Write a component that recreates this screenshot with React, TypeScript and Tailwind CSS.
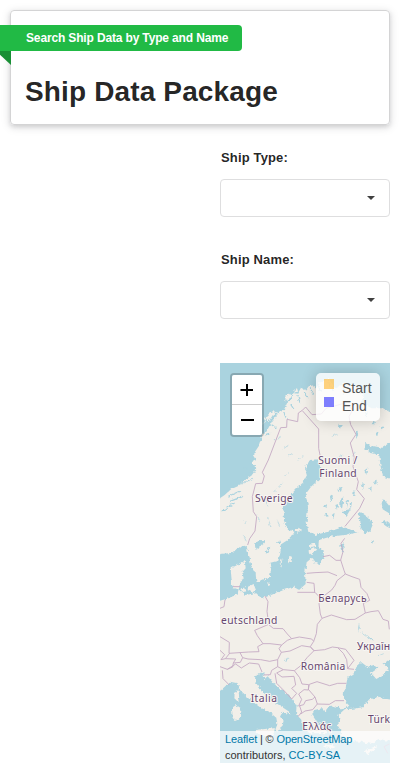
const placeLabels = "fill-[#66466f] stroke-[#f8f6f3] font-['Noto_Sans',sans-serif]";

const land = [
  // Scandinavia, Finland and the eastern mainland down to the Black Sea
  'M0 588 L15 582 L48 579 L70 565 L82 555 L95 560 L103 590 L108 615 L122 640 L124 665 L142 660 L164 650 L170 625 L166 608 L190 602 L197 575 L195 555 L226 535 L238 517 L218 508 L207 482 L205 440 L222 410 L245 385 L264 368 L276 345 L270 323 L285 300 L309 298 L315 320 L322 350 L290 378 L272 402 L279 440 L275 485 L279 512 L300 525 L345 514 L388 500 L420 515 L393 524 L345 530 L312 540 L310 563 L326 574 L327 592 L314 612 L300 609 L290 594 L275 607 L270 638 L272 672 L252 690 L236 680 L204 691 L155 710 L138 714 L124 700 L90 705 L73 690 L52 683 L49 650 L47 625 L67 615 L89 600 L92 625 L82 636 L86 652 L76 670 L67 703 L40 715 L15 722 L0 730 L0 1000 L18 991 L45 965 L68 970 L79 997 L107 1021 L138 1044 L160 1054 L184 1073 L187 1093 L181 1109 L192 1113 L202 1096 L206 1082 L195 1070 L203 1055 L226 1064 L224 1056 L184 1030 L160 1015 L139 990 L120 965 L121 946 L145 939 L148 958 L158 949 L175 969 L202 991 L231 1015 L245 1033 L243 1063 L258 1078 L265 1096 L282 1120 L335 1120 L324 1094 L306 1087 L292 1065 L298 1050 L325 1044 L332 1058 L338 1042 L362 1039 L384 1048 L403 1037 L390 1024 L383 1002 L392 985 L397 955 L414 945 L424 919 L438 906 L458 921 L476 915 L488 925 L468 940 L484 957 L510 942 L520 925 L505 912 L540 885 L540 480 L520 458 L503 448 L500 430 L505 416 L525 440 L540 440 L540 360 L505 350 L497 320 L493 285 L466 279 L450 264 L451 248 L474 258 L500 263 L522 250 L540 240 L540 165 L504 145 L470 145 L440 130 L446 104 L420 78 L390 70 L360 85 L341 56 L316 67 L302 84 L286 73 L272 91 L258 83 L248 101 L235 98 L232 117 L216 130 L207 149 L190 160 L172 182 L158 208 L142 225 L132 257 L119 277 L112 310 L124 327 L109 347 L88 360 L70 378 L48 388 L29 405 L0 425Z',
  // Turkey
  'M370 1065 L390 1047 L417 1046 L443 1042 L463 1018 L491 1010 L520 1018 L540 1020 L540 1150 L520 1142 L490 1137 L470 1153 L440 1145 L405 1144 L380 1127 L376 1109 L367 1095 L377 1084Z',
  // Islands
  'M59 998 L70 990 L73 1012 L67 1026 L58 1018Z',
  'M51 1043 L63 1035 L76 1043 L75 1073 L62 1083 L53 1074Z',
  'M123 1110 L150 1107 L180 1104 L173 1133 L150 1128 L122 1119Z',
  'M99 680 L116 672 L123 691 L114 699 L98 690Z',
  'M76 687 L90 682 L94 694 L81 696Z',
  'M281 570 L296 562 L307 569 L297 575 L292 586 L282 578Z',
  'M282 556 L300 550 L302 558 L287 562Z',
  'M219 595 L230 586 L231 596 L221 612Z',
  'M197 609 L202 592 L199 624Z',
  'M238 510 L250 503 L261 509 L248 518Z',
  'M157 673 L166 667 L168 674 L160 678Z',
  'M297 1080 L319 1097 L331 1109 L315 1104Z',
  'M330 1153 L365 1157 L356 1165 L328 1162Z',
  'M449 1172 L470 1163 L486 1158 L477 1172 L456 1183Z',
  'M141 196 L156 175 L160 187 L173 166 L190 154 L177 158 L180 150 L164 159 L154 171Z',
  'M209 111 L226 101 L230 111 L213 123Z',
  'M235 91 L246 85 L249 94 L237 98Z',
].join(' ');

const lakes = [
  'M430 462 L438 457 L463 475 L473 495 L464 515 L450 520 L436 507 L438 491Z',
  'M390 512 L410 512 L428 517 L410 521Z',
  'M499 488 L508 480 L524 492 L526 505 L516 500Z',
  'M376 555 L382 550 L389 561 L386 577 L378 572Z',
  'M121 552 L132 540 L150 541 L146 552 L131 561 L125 570Z',
  'M149 582 L159 563 L166 560 L157 579Z',
  'M185 549 L196 541 L198 549Z',
  'M423 210 L431 222 L423 237Z', 'M371 191 L381 197 L378 207 L369 201Z',
  'M376 418 L385 412 L382 443 L376 438Z', 'M392 423 L399 420 L396 446Z', 'M404 430 L411 425 L407 450Z',
  'M361 435 L370 432 L366 450Z', 'M345 411 L354 405 L349 430Z', 'M380 453 L407 447 L395 467 L382 461Z',
  'M350 465 L359 459 L356 474Z', 'M326 438 L336 433 L335 444Z', 'M327 466 L336 460 L337 471Z', 'M411 399 L421 390 L417 407Z', 'M366 390 L383 379 L378 395Z',
  'M470 540 L480 543 L473 551Z', 'M475 363 L485 359 L484 376Z', 'M448 331 L457 325 L454 345Z', 'M438 376 L448 369 L444 388Z', 'M463 385 L470 379 L469 393Z',
  'M482 220 L491 213 L486 232Z', 'M470 190 L480 184 L477 197Z', 'M450 160 L458 158 L454 171Z', 'M493 203 L506 199 L501 208Z',
  'M211 897 L222 893 L207 902Z', 'M456 829 L477 840 L473 843Z', 'M430 790 L433 810 L430 818Z',
].join(' ');

const fjords = 'M110 335 L85 345 M113 355 L80 372 M120 317 L82 326 M75 393 L40 409 M84 409 L43 425 M42 445 L20 454 M59 429 L35 441 M125 294 L103 307 M150 225 L166 220 M170 194 L184 204 M206 158 L214 174 M227 133 L238 150 M249 105 L254 128 M270 98 L277 115 M285 81 L295 106 M308 75 L319 95 M341 70 L355 93 M390 80 L385 104';

const rivers = 'M220 337 L207 350 M204 369 L191 380 M185 385 L176 396 M151 419 L159 439 M126 464 L134 482 M158 474 L168 500 M187 482 L194 497 M85 526 L94 544 M87 480 L91 492 M220 256 L204 267 M197 232 L179 243 M233 280 L219 288 M265 290 L249 297 M382 285 L366 295 M349 229 L368 222 M419 275 L412 292 M432 790 L433 813 L458 830 L476 842 M488 855 L510 847 M492 887 L506 881 M207 903 L224 893';

const borders = 'M98 555 L104 536 L120 513 L125 470 L115 455 L112 410 L122 371 L142 370 L148 348 L142 337 L160 300 L197 203 L215 202 L216 178 L248 185 L250 159 L262 151 L272 141 L291 164 L319 162 L333 145 L359 138 L386 130 L414 148 L402 170 L407 194 L423 223 L406 249 L418 293 L414 320 L430 365 L425 388 L448 416 L434 445 L390 499 M262 152 L311 207 L311 265 L318 300 M389 535 L378 550 L384 575 L377 600 L387 631 L391 642 L366 662 L360 676 L350 690 L321 712 L312 731 L316 762 L321 775 L307 793 L304 821 L296 844 L286 860 L297 872 M324 590 L344 586 L363 601 L377 601 M275 640 L300 638 L339 636 L366 647 M391 642 L411 650 L434 658 L438 682 L456 701 L464 721 L445 730 L451 759 L420 778 L395 779 L349 765 L321 775 M451 759 L468 755 L490 752 L504 778 L520 783 L523 808 M247 697 L300 697 L317 715 M275 667 L297 670 L299 697 M54 680 L76 680 M150 708 L159 725 L156 754 L161 793 L119 811 L127 827 L144 851 L128 860 L132 875 L101 876 L72 878 L42 880 L43 847 L15 830 M160 793 L175 805 L204 806 L217 822 L230 836 L253 831 L290 837 L296 844 M230 836 L217 841 L200 855 L165 851 L144 851 M200 855 L192 866 L199 877 L188 899 L164 904 L137 899 L99 897 L83 893 L75 878 M199 877 L225 873 L260 857 L286 861 L297 872 L277 892 L256 918 L238 932 L205 929 L188 920 L188 899 M15 871 L29 884 L18 899 L31 896 L44 880 M31 896 L62 897 L55 909 L76 907 L83 893 M15 920 L37 928 L53 921 L55 909 M22 931 L24 956 L43 975 M37 928 L62 912 L79 924 L103 909 L131 912 L141 936 M188 920 L170 931 L166 944 L146 945 M205 929 L185 939 L201 951 L237 949 L242 975 L230 985 L245 1000 L230 1017 L209 994 L185 970 L180 940 M238 932 L254 953 L261 972 L281 974 L280 990 L267 989 L251 1002 L260 1018 L251 1038 L266 1034 L272 1022 L292 1018 L300 1011 L280 988 L283 973 L306 965 L344 977 L368 970 L394 970 M300 1011 L307 1032 L343 1033 L361 1022 L387 1022 M297 872 L329 869 L352 861 L368 863 L385 880 L395 899 L398 926 L417 928 M368 863 L392 868 L405 885 L417 901 L398 926 M307 1032 L293 1049 L270 1053 L257 1062 M254 1038 L260 1056 L249 1070 M523 1152 L507 1160 L518 1180 M15 745 L27 740 L30 719';

export default function App() {
  return (
    <main className="min-h-[763px] overflow-hidden bg-white pt-[10px] text-[rgba(0,0,0,0.87)] font-['Liberation_Sans',Arial,sans-serif]">
      <header className="relative mx-[10px] h-[115px] rounded border border-[#d4d4d5] px-[14px] pt-[14px] shadow-[0_2px_4px_0_rgba(34,36,38,0.12),0_2px_10px_0_rgba(34,36,38,0.15)]">
        <div className="relative -ml-[29px] h-[26px] w-[246px] whitespace-nowrap rounded-r bg-[#21ba45] pl-[30px] text-[12px] font-bold leading-[26px] tracking-[-0.15px] text-white">
          Search Ship Data by Type and Name
          <svg className="absolute left-0 top-full h-[14px] w-[15px]" viewBox="0 0 15 14"><path d="M0 0H15V14Z" fill="#198f35" /></svg>
        </div>
        <h1 className="mt-[23px] whitespace-nowrap text-[28px] font-bold leading-[36px] tracking-[0.14px]">Ship Data Package</h1>
      </header>

      <section className="ml-[220px] mr-[10px] pt-[23px]">
        <Field label="Ship Type:" />
        <Field label="Ship Name:" />
        <div className="relative mt-[11px] h-[400px] w-[170px] overflow-hidden bg-[#aad3df]">
          <EuropeMap />
          <div className="absolute left-[10px] top-[10px] w-[34px] rounded border-2 border-black/20 bg-clip-padding">
            <button aria-label="Zoom in" className="flex h-[30px] w-[30px] items-center justify-center rounded-t-[2px] border-b border-[#ccc] bg-white"><svg width="14" height="14" viewBox="0 0 14 14"><path d="M0.5 6H13V8H0.5ZM6 1H8V13H6Z" /></svg></button>
            <button aria-label="Zoom out" className="flex h-[30px] w-[30px] items-center justify-center rounded-b-[2px] bg-white"><svg width="14" height="14" viewBox="0 0 14 14"><path d="M1 6H14V8H1Z" /></svg></button>
          </div>
          <div className="absolute right-[10px] top-[10px] h-[48px] w-[64px] rounded-[5px] bg-white/80 px-2 py-[6px] text-[14px] leading-[18px] text-[#555] shadow-[0_0_15px_rgba(0,0,0,0.2)]">
            <div className="flex"><i className="mr-2 h-[10px] w-[10px] bg-[#ffa500] opacity-50" /><span>Start</span></div>
            <div className="flex"><i className="mr-2 h-[10px] w-[10px] bg-[#0000ff] opacity-50" /><span>End</span></div>
          </div>
          <footer className="absolute bottom-0 w-full whitespace-nowrap bg-white/70 px-[5px] text-[11px] leading-4 text-[#333]">
            <div className="tracking-[-0.14px]"><a className="text-[#0078a8]">Leaflet</a> | © <a className="text-[#0078a8]">OpenStreetMap</a></div>
            <div>contributors, <a className="text-[#0078a8]">CC-BY-SA</a></div>
          </footer>
        </div>
      </section>
    </main>
  );
}

function Field({ label }: { label: string }) {
  return (
    <div className="h-[102px]">
      <label className="block h-[31px] pl-px text-[13px] font-bold leading-[20px] tracking-[0.15px]">{label}</label>
      <button aria-label={label} className="flex h-[38px] w-full items-center justify-end rounded border border-[#dededf] bg-white pr-[14px]">
        <svg width="8" height="4" viewBox="0 0 8 4"><path d="M0 0H8L4 4Z" fill="#404040" /></svg>
      </button>
    </div>
  );
}

function EuropeMap() {
  return (
    <svg className="absolute inset-0 h-full w-full" viewBox="15 9 510 1200">
      <defs>
        <filter id="coast" x="0" y="0" width="540" height="1210" filterUnits="userSpaceOnUse" colorInterpolationFilters="sRGB">
          <feTurbulence type="fractalNoise" baseFrequency="0.11" numOctaves="2" seed="7" />
          <feDisplacementMap in="SourceGraphic" scale="12" xChannelSelector="R" yChannelSelector="G" />
        </filter>
      </defs>
      <g filter="url(#coast)">
        <path d={land} fill="#f2efe9" />
        <path d={lakes} fill="#aad3df" />
        <path d={fjords} fill="none" stroke="#aad3df" strokeWidth="3.5" />
        <path d={rivers} fill="none" stroke="#aad3df" strokeWidth="2" />
      </g>
      <path d={borders} fill="none" stroke="#c5aac4" strokeWidth="2.7" strokeLinejoin="round" />
      <g className={placeLabels} strokeWidth="6" paintOrder="stroke" strokeLinejoin="round" fontSize="31">
        <text x="310" y="312" textLength="117">Suomi /</text>
        <text x="313" y="350" textLength="112">Finland</text>
        <text x="120" y="425" textLength="113">Sverige</text>
        <text x="310" y="725" textLength="145">Беларусь</text>
        <text x="18" y="793" textLength="169">eutschland</text>
        <text x="426" y="870" textLength="99">Україн</text>
        <text x="257" y="931" textLength="134">România</text>
        <text x="107" y="1025" textLength="79">Italia</text>
        <text x="459" y="1090" textLength="66">Türk</text>
        <text x="262" y="1109" textLength="87">Ελλάς</text>
      </g>
    </svg>
  );
}
